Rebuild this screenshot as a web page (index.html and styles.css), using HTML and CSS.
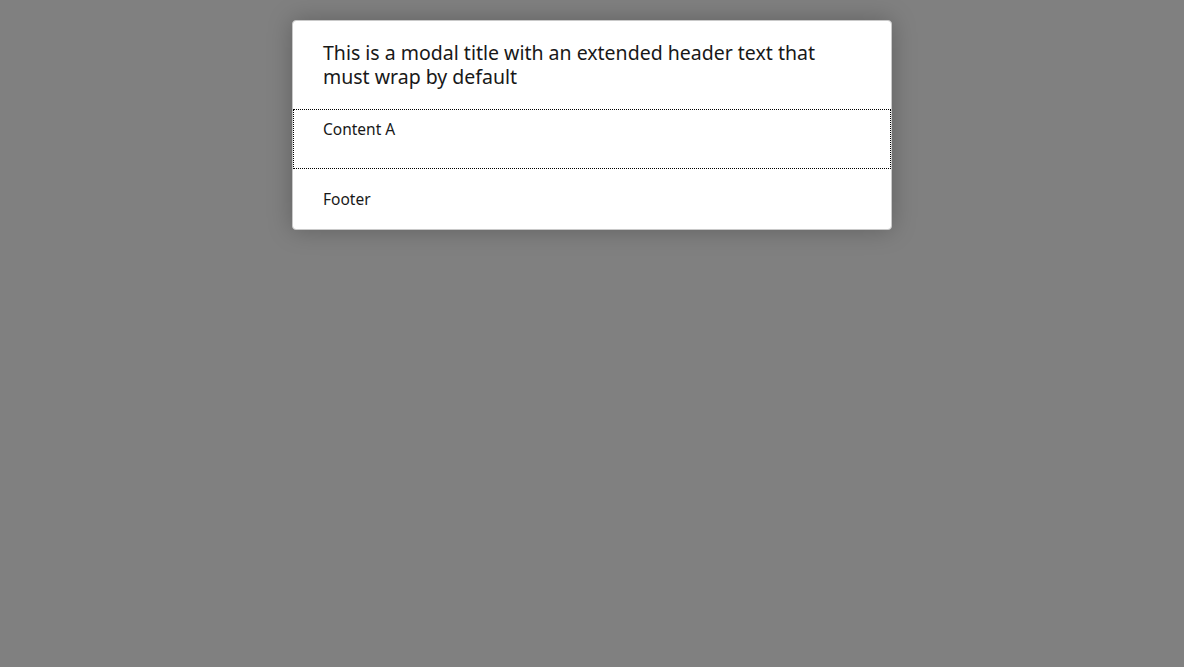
FILE: index.html
```html
<!DOCTYPE html>
<html lang="en">
<head>
<meta charset="utf-8">
<title>Modal</title>
<link rel="stylesheet" href="styles.css">
</head>
<body>
<div class="backdrop">
  <section class="modal" role="dialog" aria-labelledby="modal-title">
    <header class="modal-header">
      <h2 id="modal-title" class="modal-title">This is a modal title with an extended header text that must wrap by default</h2>
    </header>
    <div class="modal-content" tabindex="0">
      <p>Content A</p>
    </div>
    <footer class="modal-footer">
      <p>Footer</p>
    </footer>
  </section>
</div>
</body>
</html>
```

FILE: styles.css
```css
html, body {
  margin: 0;
  padding: 0;
  height: 100%;
}
body {
  background: #808080;
  font-family: "Noto Sans", "Open Sans", sans-serif;
  color: #181818;
}
.backdrop {
  display: flex;
  justify-content: center;
  padding-top: 20px;
}
.modal {
  box-sizing: border-box;
  width: 600px;
  background: #fff;
  border: 1px solid #c9c9c9;
  border-radius: 4px;
  box-shadow: 0 0 24px rgba(0, 0, 0, 0.25);
}
.modal-header {
  padding: 20px 30px;
}
.modal-title {
  margin: 0;
  font-size: 19.5px;
  font-weight: 400;
  line-height: 24px;
}
.modal-content {
  padding: 10px 30px 30px;
  outline: 1px dotted #000;
  outline-offset: -1px;
}
.modal-content p,
.modal-footer p {
  margin: 0;
  font-size: 15.5px;
  line-height: 20px;
}
.modal-footer {
  padding: 20px 30px;
}
```
